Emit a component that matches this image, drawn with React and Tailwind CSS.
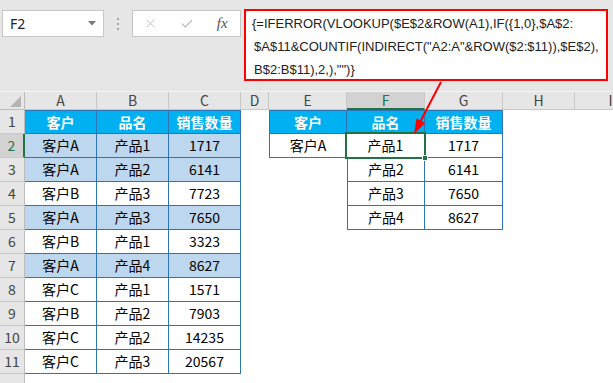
import React from 'react';
import { X, Check } from 'lucide-react';

const COLS = [
  { key: 'A', w: 'w-[72px]' },
  { key: 'B', w: 'w-[72px]' },
  { key: 'C', w: 'w-[72px]' },
  { key: 'D', w: 'w-[28px]' },
  { key: 'E', w: 'w-[78px]' },
  { key: 'F', w: 'w-[78px]' },
  { key: 'G', w: 'w-[78px]' },
  { key: 'H', w: 'w-[72px]' },
  { key: 'I', w: 'w-[72px]' },
];

const ROWS = {
  1: { A: '客户', B: '品名', C: '销售数量', E: '客户', F: '品名', G: '销售数量' },
  2: { A: '客户A', B: '产品1', C: '1717', E: '客户A', F: '产品1', G: '1717' },
  3: { A: '客户A', B: '产品2', C: '6141', F: '产品2', G: '6141' },
  4: { A: '客户B', B: '产品3', C: '7723', F: '产品3', G: '7650' },
  5: { A: '客户A', B: '产品3', C: '7650', F: '产品4', G: '8627' },
  6: { A: '客户B', B: '产品1', C: '3323' },
  7: { A: '客户A', B: '产品4', C: '8627' },
  8: { A: '客户C', B: '产品1', C: '1571' },
  9: { A: '客户B', B: '产品2', C: '7903' },
  10: { A: '客户C', B: '产品2', C: '14235' },
  11: { A: '客户C', B: '产品3', C: '20567' },
};

const LIGHT = [2, 3, 5, 7];

const inTable = (r, c) => {
  if (['A', 'B', 'C'].includes(c)) return true;
  if (c === 'E') return r <= 2;
  if (c === 'F' || c === 'G') return r <= 5;
  return false;
};

const Cell = ({ r, col }) => {
  const c = col.key;
  const table = inTable(r, c);
  const left = COLS[COLS.findIndex((x) => x.key === c) - 1];
  const needLeft = table && c !== 'A' && !(left && inTable(r, left.key));
  let cls = 'shrink-0 h-full flex items-center justify-center ' + col.w;
  if (table && r === 1) cls += ' bg-[#00b0f0] text-white font-bold';
  else if (table && LIGHT.includes(r) && ['A', 'B', 'C'].includes(c)) cls += ' bg-[#bdd7ee] text-black';
  else cls += ' bg-white text-black';
  if (table) cls += ' border-r border-b border-[#2e75b6]';
  if (table && r === 1) cls += ' border-t';
  if (needLeft) cls += ' border-l';
  const selected = r === 2 && c === 'F';
  return (
    <div className={cls + (selected ? ' relative' : '')}>
      <span>{ROWS[r][c] || ''}</span>
      {selected && (
        <div className="absolute -top-[2px] -left-[2px] -right-[2px] -bottom-[2px] border-2 border-[#217346]">
          <div className="absolute -right-[4px] -bottom-[4px] w-[6px] h-[6px] bg-[#217346] border border-white" />
        </div>
      )}
    </div>
  );
};

export default function App() {
  const rowNums = Object.keys(ROWS).map(Number);
  return (
    <div className="relative w-[613px] h-[383px] overflow-hidden bg-white" style={{ fontFamily: '"Noto Sans CJK SC", sans-serif' }}>
      {/* formula bar */}
      <div className="h-[91px] bg-[#e6e6e6] flex items-start pt-[10px]">
        <div className="ml-[2px] w-[102px] h-[27px] bg-white border border-[#c6c6c6] flex items-center justify-between pl-[7px] pr-[7px] text-[14px] text-[#222]" style={{ fontFamily: '"Noto Sans", sans-serif' }}>
          <span>F2</span>
          <svg width="8" height="5" viewBox="0 0 8 5"><polygon points="0,0 8,0 4,4.5" fill="#777" /></svg>
        </div>
        <div className="ml-[13px] mt-[8px] flex flex-col gap-[3px]">
          <div className="w-[2px] h-[2px] bg-[#a6a6a6]" />
          <div className="w-[2px] h-[2px] bg-[#a6a6a6]" />
          <div className="w-[2px] h-[2px] bg-[#a6a6a6]" />
        </div>
        <div className="ml-[13px] w-[109px] h-[27px] bg-white border border-[#c6c6c6] flex items-center">
          <div className="w-[36px] flex justify-center"><X size={13} strokeWidth={1.5} color="#b5b5b5" /></div>
          <div className="w-[36px] flex justify-center"><Check size={14} strokeWidth={2.5} color="#c2c2c2" /></div>
          <div className="w-[36px] flex justify-center text-[15px] italic text-[#555]" style={{ fontFamily: '"Liberation Serif", serif' }}>fx</div>
        </div>
        <div className="ml-[3px] -mt-[1px] w-[364px] h-[72px] bg-white border-2 border-[#ff0000] pl-[6px] pt-[1px] text-[13px] leading-[23px] text-[#222] whitespace-nowrap" style={{ fontFamily: '"Liberation Sans", sans-serif' }}>
          <div>{'{=IFERROR(VLOOKUP($E$2&ROW(A1),IF({1,0},$A$2:'}</div>
          <div className="pl-[2px]">{'$A$11&COUNTIF(INDIRECT("A2:A"&ROW($2:$11)),$E$2),'}</div>
          <div className="pl-[2px]">{'B$2:B$11),2,),"")}'}</div>
        </div>
      </div>

      {/* column headers */}
      <div className="flex h-[19px] border-t border-[#f4f4f4] text-[14px] text-[#444]">
        <div className="shrink-0 w-[25px] h-full bg-[#e6e6e6] border-r border-b border-[#bcbcbc] relative">
          <svg className="absolute left-0 top-0" width="25" height="18" viewBox="0 0 25 18"><polygon points="21,4 21,15 10,15" fill="#b4b4b4" /></svg>
        </div>
        {COLS.map((col) =>
          col.key === 'F' ? (
            <div key={col.key} className={'shrink-0 h-full flex items-center justify-center bg-[#d2d2d2] text-[#217346] border-r border-[#c8c8c8] border-b-2 border-b-[#217346] ' + col.w}>
              {col.key}
            </div>
          ) : (
            <div key={col.key} className={'shrink-0 h-full flex items-center justify-center bg-[#e6e6e6] border-r border-b border-[#c8c8c8] ' + col.w}>
              {col.key}
            </div>
          )
        )}
      </div>

      {/* rows */}
      {rowNums.map((r) => (
        <div key={r} className="flex h-[24px] text-[14px]">
          {r === 2 ? (
            <div className="shrink-0 w-[25px] h-full flex items-end justify-center pb-[1px] bg-[#d2d2d2] text-[#217346] border-b border-[#c8c8c8] border-r-2 border-r-[#217346]">
              {r}
            </div>
          ) : (
            <div className="shrink-0 w-[25px] h-full flex items-end justify-center pb-[1px] bg-[#e6e6e6] text-[#444] border-b border-[#c8c8c8] border-r border-r-[#bcbcbc]">
              {r}
            </div>
          )}
          {COLS.map((col) => (
            <Cell key={col.key} r={r} col={col} />
          ))}
        </div>
      ))}
      <div className="flex h-[9px]">
        <div className="shrink-0 w-[25px] h-full bg-[#e6e6e6] border-r border-[#bcbcbc]" />
        <div className="flex-1 bg-white" />
      </div>

      {/* arrow */}
      <svg className="absolute left-0 top-0 pointer-events-none" width="613" height="383" viewBox="0 0 613 383">
        <line x1="441" y1="82" x2="419" y2="124" stroke="#ff0000" strokeWidth="2" />
        <polygon points="414,134 425.3,123 416.5,118.4" fill="#ff0000" />
      </svg>
    </div>
  );
}
